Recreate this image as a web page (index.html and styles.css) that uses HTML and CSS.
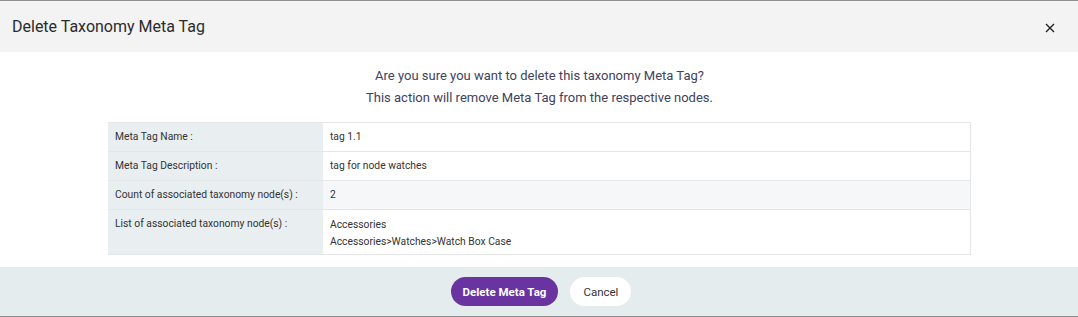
FILE: index.html
```html
<!DOCTYPE html>
<html>
<head>
<meta charset="utf-8">
<link rel="stylesheet" href="styles.css">
</head>
<body>
<div class="modal">
  <div class="modal-header">
    <div class="modal-title">Delete Taxonomy Meta Tag</div>
    <button class="close-btn" aria-label="Close">
      <svg width="10" height="10" viewBox="0 0 10 10"><path d="M1 1L9 9M9 1L1 9" stroke="#222" stroke-width="1.4" fill="none"/></svg>
    </button>
  </div>
  <div class="modal-body">
    <p class="confirm">Are you sure you want to delete this taxonomy Meta Tag?</p>
    <p class="confirm">This action will remove Meta Tag from the respective nodes.</p>
    <div class="details">
      <div class="row">
        <div class="label">Meta Tag Name :</div>
        <div class="value">tag 1.1</div>
      </div>
      <div class="row">
        <div class="label">Meta Tag Description :</div>
        <div class="value">tag for node watches</div>
      </div>
      <div class="row alt">
        <div class="label">Count of associated taxonomy node(s) :</div>
        <div class="value">2</div>
      </div>
      <div class="row">
        <div class="label">List of associated taxonomy node(s) :</div>
        <div class="value multi"><div>Accessories</div><div>Accessories&gt;Watches&gt;Watch Box Case</div></div>
      </div>
    </div>
  </div>
  <div class="modal-footer">
    <button class="btn btn-primary">Delete Meta Tag</button>
    <button class="btn btn-default">Cancel</button>
  </div>
</div>
</body>
</html>
```
FILE: styles.css
```css
* { box-sizing: border-box; }
html, body { margin: 0; padding: 0; background: #ffffff; }
body { font-family: Roboto, "Noto Sans", Arial, sans-serif; }
.modal {
  width: 1078px;
  height: 317px;
  border-top: 1px solid #8f8f8f;
  border-bottom: 1px solid #8f8f8f;
  display: flex;
  flex-direction: column;
  background: #fff;
}
.modal-header {
  height: 51px;
  flex: none;
  background: #f3f3f3;
  display: flex;
  align-items: center;
  justify-content: space-between;
  padding: 0 20px 0 12px;
}
.modal-title {
  font-size: 16px;
  color: #2b2b2b;
}
.close-btn {
  border: 0;
  background: transparent;
  padding: 0;
  width: 16px;
  height: 16px;
  display: flex;
  align-items: center;
  justify-content: center;
  margin-top: 2px;
}
.modal-body {
  flex: 1;
  padding: 13px 107px 0 108px;
}
.confirm {
  margin: 0;
  text-align: center;
  font-size: 13px;
  line-height: 22px;
  color: #42425e;
}
.details {
  margin-top: 13px;
  border: 1px solid #e4e6e8;
  border-left: 0;
}
.row {
  display: flex;
  border-top: 1px solid #e4e6e8;
  font-size: 10.3px;
  color: #333;
}
.row:first-child { border-top: 0; }
.label {
  width: 215px;
  flex: none;
  background: #e9eef0;
  padding: 8px 7px;
  line-height: 12px;
  min-height: 28px;
}
.value {
  flex: 1;
  padding: 8px 7px;
  line-height: 12px;
  background: #fff;
}
.row.alt .value { background: #f5f7f9; }
.value.multi { padding: 6px 7px 4px; line-height: 17px; }
.modal-footer {
  height: 49px;
  flex: none;
  background: #e5ecee;
  display: flex;
  align-items: center;
  justify-content: center;
  gap: 12px;
  padding-left: 4px;
}
.btn {
  font-family: Roboto, "Noto Sans", Arial, sans-serif;
  border: 0;
  border-radius: 15px;
  height: 29px;
  font-size: 11.5px;
  padding: 0 12px;
}
.btn-primary {
  background: #6934a0;
  color: #fff;
  font-weight: 700;
}
.btn-default {
  background: #fff;
  color: #333;
  padding: 0 13px;
}
```
